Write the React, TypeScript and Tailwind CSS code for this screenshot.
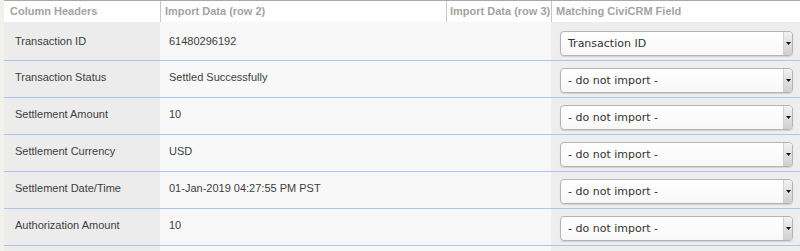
const ROWS = [
  { label: 'Transaction ID', value: '61480296192', field: 'Transaction ID' },
  { label: 'Transaction Status', value: 'Settled Successfully', field: '- do not import -' },
  { label: 'Settlement Amount', value: '10', field: '- do not import -' },
  { label: 'Settlement Currency', value: 'USD', field: '- do not import -' },
  { label: 'Settlement Date/Time', value: '01-Jan-2019 04:27:55 PM PST', field: '- do not import -' },
  { label: 'Authorization Amount', value: '10', field: '- do not import -' },
]

const COLS = 'grid grid-cols-[156px_286px_105px_1fr]'

function FieldSelect({ value }: { value: string }) {
  return (
    <div className="flex h-[25px] w-[233px] items-stretch overflow-hidden rounded-[4px] border border-[#b4b4b4] bg-gradient-to-b from-white to-[#f7f7f7] shadow-[0_1px_1px_rgba(0,0,0,0.12)]">
      <span className="flex flex-1 items-center pl-[7px] font-['DejaVu_Sans',sans-serif] text-[11px] text-[#333]">
        {value}
      </span>
      <span className="flex w-[9px] items-center justify-center border-l border-[#d0d0d0] bg-gradient-to-b from-[#f2f2f2] to-[#cfcfcf]">
        <svg width="5" height="3" viewBox="0 0 5 3">
          <path d="M0 0h5L2.5 3z" fill="#111" />
        </svg>
      </span>
    </div>
  )
}

export default function App() {
  return (
    <div className="h-[251px] w-[800px] overflow-hidden bg-[#f1f0ea] pl-[4px] font-['Liberation_Sans',Arial,sans-serif]">
      {/* Header */}
      <div className={`${COLS} h-[22px] border-t border-[#a9a9a9] bg-white text-[11px] font-bold text-[#a3a3a3]`}>
        <div className="flex items-center pl-[6px]">Column Headers</div>
        <div className="flex items-center border-l border-[#c8c8c8] pl-[4px]">Import Data (row 2)</div>
        <div className="flex items-center border-l border-[#c8c8c8] pl-[3px]">Import Data (row 3)</div>
        <div className="flex items-center border-l border-[#c8c8c8] pl-[4px]">Matching CiviCRM Field</div>
      </div>

      {/* Rows */}
      {ROWS.map((row, i) => (
        <div
          key={row.label}
          className={`${COLS} border-b border-[#aac6ef] text-[11px] leading-[16px] text-[#3e3e3e] ${i === 0 ? 'h-[39px]' : 'h-[37px]'}`}
        >
          <div className={`bg-[#ececec] pl-[11px] ${i === 0 ? 'pt-[11px]' : 'pt-[8px]'}`}>{row.label}</div>
          <div className={`bg-[#f8f8f8] pl-[9px] ${i === 0 ? 'pt-[11px]' : 'pt-[8px]'}`}>{row.value}</div>
          <div className="bg-[#f8f8f8]" />
          <div className={`bg-[#eeeeee] pl-[9px] ${i === 0 ? 'pt-[9px]' : 'pt-[7px]'}`}>
            <FieldSelect value={row.field} />
          </div>
        </div>
      ))}

      {/* next row, cut off */}
      <div className={`${COLS} h-[37px]`}>
        <div className="bg-[#ececec]" />
        <div className="bg-[#f8f8f8]" />
        <div className="bg-[#f8f8f8]" />
        <div className="bg-[#eeeeee]" />
      </div>
    </div>
  )
}
